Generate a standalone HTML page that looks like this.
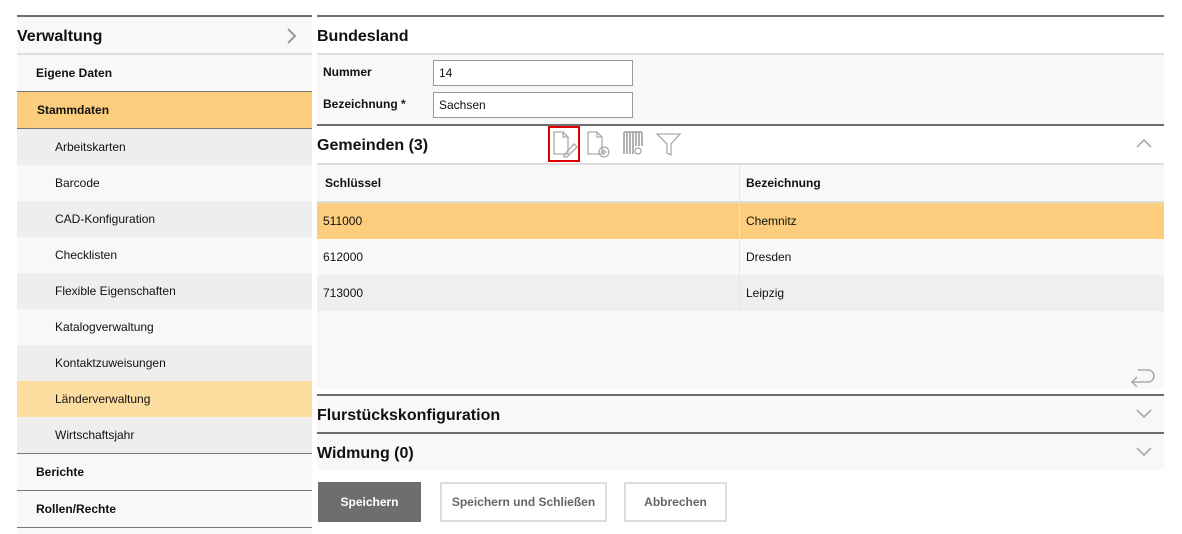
<!DOCTYPE html>
<html><head><meta charset="utf-8"><style>
*{margin:0;padding:0;box-sizing:border-box}
body{width:1182px;height:534px;background:#fff;font-family:"Liberation Sans",Arial,sans-serif;position:relative;overflow:hidden;color:#111}
.a{position:absolute}
.t{font-size:12px;display:flex;align-items:center}
.b{font-weight:bold}
.h{font-size:16px;font-weight:bold;display:flex;align-items:center;padding-top:3px}
</style></head><body>
<!-- sidebar -->
<div class="a" style="left:17px;top:15px;width:295px;height:2px;background:#6e6e6e"></div>
<div class="a h" style="left:17px;top:17px;width:295px;height:36px;background:#f8f8f8">Verwaltung</div>
<svg class="a" style="left:286px;top:28px" width="12" height="16"><path d="M2 1 L9 8 L2 15" stroke="#999" stroke-width="2" fill="none"/></svg>
<div class="a" style="left:17px;top:53px;width:295px;height:2px;background:#ddd"></div>
<div class="a t b" style="left:17px;top:55px;width:295px;height:36px;background:#f8f8f8;padding-left:19px">Eigene Daten</div>
<div class="a" style="left:17px;top:91px;width:295px;height:1px;background:#777"></div>
<div class="a t b" style="left:17px;top:92px;width:295px;height:36px;background:#fbcd7c;padding-left:20px">Stammdaten</div>
<div class="a" style="left:17px;top:128px;width:295px;height:1px;background:#777"></div>
<div class="a t" style="left:17px;top:129px;width:295px;height:36px;background:#eee;padding-left:38px">Arbeitskarten</div>
<div class="a t" style="left:17px;top:165px;width:295px;height:36px;background:#f8f8f8;padding-left:38px">Barcode</div>
<div class="a t" style="left:17px;top:201px;width:295px;height:36px;background:#eee;padding-left:38px">CAD-Konfiguration</div>
<div class="a t" style="left:17px;top:237px;width:295px;height:36px;background:#f8f8f8;padding-left:38px">Checklisten</div>
<div class="a t" style="left:17px;top:273px;width:295px;height:36px;background:#eee;padding-left:38px">Flexible Eigenschaften</div>
<div class="a t" style="left:17px;top:309px;width:295px;height:36px;background:#f8f8f8;padding-left:38px">Katalogverwaltung</div>
<div class="a t" style="left:17px;top:345px;width:295px;height:36px;background:#eee;padding-left:38px">Kontaktzuweisungen</div>
<div class="a t" style="left:17px;top:381px;width:295px;height:36px;background:#fddc9f;padding-left:38px">Länderverwaltung</div>
<div class="a t" style="left:17px;top:417px;width:295px;height:36px;background:#eee;padding-left:38px">Wirtschaftsjahr</div>
<div class="a" style="left:17px;top:453px;width:295px;height:1px;background:#777"></div>
<div class="a t b" style="left:17px;top:454px;width:295px;height:36px;background:#f8f8f8;padding-left:19px">Berichte</div>
<div class="a" style="left:17px;top:490px;width:295px;height:1px;background:#777"></div>
<div class="a t b" style="left:17px;top:491px;width:295px;height:36px;background:#f8f8f8;padding-left:19px">Rollen/Rechte</div>
<div class="a" style="left:17px;top:527px;width:295px;height:1px;background:#777"></div>
<div class="a" style="left:17px;top:528px;width:295px;height:6px;background:#f8f8f8"></div>

<!-- main -->
<div class="a" style="left:317px;top:15px;width:847px;height:2px;background:#6e6e6e"></div>
<div class="a h" style="left:317px;top:17px;width:847px;height:36px;background:#fff">Bundesland</div>
<div class="a" style="left:317px;top:53px;width:847px;height:2px;background:#ddd"></div>
<div class="a" style="left:317px;top:55px;width:847px;height:69px;background:#f8f8f8"></div>
<div class="a t b" style="left:323px;top:62px;height:20px">Nummer</div>
<div class="a t b" style="left:323px;top:94px;height:20px">Bezeichnung *</div>
<div class="a t" style="left:433px;top:60px;width:200px;height:26px;background:#fff;border:1px solid #999;padding-left:5px">14</div>
<div class="a t" style="left:433px;top:92px;width:200px;height:26px;background:#fff;border:1px solid #999;padding-left:5px">Sachsen</div>
<div class="a" style="left:317px;top:124px;width:847px;height:2px;background:#6e6e6e"></div>
<div class="a h" style="left:317px;top:126px;width:847px;height:37px;background:#fff">Gemeinden (3)</div>
<div class="a" style="left:548px;top:126px;width:32px;height:36px;border:2px solid #e00000"></div>
<svg class="a" style="left:550px;top:128px" width="140" height="32" fill="none" stroke="#aaa" stroke-width="1.3">
<path d="M4 4 H13 L18 9 V26 H4 Z M13 4 V9 H18"/><path d="M14 27 L24 16 L27 19 L17 29 L14 29 Z"/>
<path d="M38 4 H47 L52 9 V26 H38 Z M47 4 V9 H52"/><circle cx="54" cy="24" r="5"/><path d="M54 21 V27 M51 24 H57"/>
<path d="M74 4 V26 M77 4 V26 M80 4 V26 M83 4 V26 M86 4 V18 M89 4 V18 M92 4 V18 M74 4 H92" stroke-width="1.8"/><circle cx="88" cy="23" r="3"/>
<path d="M107 6 H130 L121 16 V27 L117 25 V16 Z"/>
</svg>
<svg class="a" style="left:1136px;top:138px" width="16" height="12"><path d="M1 9 L8 2 L15 9" stroke="#aaa" stroke-width="1.6" fill="none"/></svg>
<div class="a" style="left:317px;top:163px;width:847px;height:2px;background:#ddd"></div>
<div class="a" style="left:317px;top:165px;width:847px;height:36px;background:#f8f8f8"></div>
<div class="a t b" style="left:325px;top:165px;height:36px">Schlüssel</div>
<div class="a t b" style="left:746px;top:165px;height:36px">Bezeichnung</div>
<div class="a" style="left:317px;top:201px;width:847px;height:2px;background:#ddd"></div>
<div class="a" style="left:317px;top:203px;width:847px;height:36px;background:#fbcd7c"></div>
<div class="a" style="left:317px;top:239px;width:847px;height:36px;background:#f9f9f9"></div>
<div class="a" style="left:317px;top:275px;width:847px;height:36px;background:#efefef"></div>
<div class="a" style="left:739px;top:165px;width:1px;height:146px;background:#e6e6e6"></div>
<div class="a t" style="left:323px;top:203px;height:36px">511000</div>
<div class="a t" style="left:746px;top:203px;height:36px">Chemnitz</div>
<div class="a t" style="left:323px;top:239px;height:36px">612000</div>
<div class="a t" style="left:746px;top:239px;height:36px">Dresden</div>
<div class="a t" style="left:323px;top:275px;height:36px">713000</div>
<div class="a t" style="left:746px;top:275px;height:36px">Leipzig</div>
<div class="a" style="left:317px;top:311px;width:847px;height:78px;background:#f8f8f8"></div>
<svg class="a" style="left:1128px;top:367px" width="28" height="20"><path d="M10 3 H20 A6 6 0 0 1 20 15 H4 M9 10 L4 15 L9 20" stroke="#aaa" stroke-width="1.5" fill="none"/></svg>
<div class="a" style="left:317px;top:394px;width:847px;height:2px;background:#6e6e6e"></div>
<div class="a h" style="left:317px;top:396px;width:847px;height:36px;background:#f8f8f8">Flurstückskonfiguration</div>
<svg class="a" style="left:1136px;top:408px" width="16" height="12"><path d="M1 2 L8 9 L15 2" stroke="#aaa" stroke-width="1.6" fill="none"/></svg>
<div class="a" style="left:317px;top:432px;width:847px;height:2px;background:#6e6e6e"></div>
<div class="a h" style="left:317px;top:434px;width:847px;height:36px;background:#f8f8f8">Widmung (0)</div>
<svg class="a" style="left:1136px;top:446px" width="16" height="12"><path d="M1 2 L8 9 L15 2" stroke="#aaa" stroke-width="1.6" fill="none"/></svg>
<div class="a t b" style="left:318px;top:482px;width:103px;height:40px;background:#6e6e6e;color:#fff;justify-content:center">Speichern</div>
<div class="a t b" style="left:440px;top:482px;width:167px;height:40px;border:2px solid #ddd;color:#666;justify-content:center">Speichern und Schließen</div>
<div class="a t b" style="left:624px;top:482px;width:103px;height:40px;border:2px solid #ddd;color:#666;justify-content:center">Abbrechen</div>
</body></html>
